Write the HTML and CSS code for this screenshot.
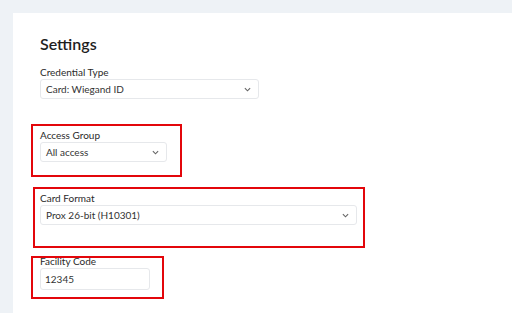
FILE: index.html
```html
<!DOCTYPE html>
<html lang="en">
<head>
    <meta charset="UTF-8">
    <meta name="viewport" content="width=device-width, initial-scale=1.0">
    <title>Settings</title>
    <link rel="stylesheet" href="styles.css">
</head>
<body>
    <div class="card">
        <h1>Settings</h1>

        <div class="field">
            <label>Credential Type</label>
            <div class="select w-cred">
                <span>Card: Wiegand ID</span>
                <svg class="chev" viewBox="0 0 8 5" width="7" height="5"><path d="M1 1 L4 4 L7 1" fill="none" stroke="#666" stroke-width="1.3"/></svg>
            </div>
        </div>

        <div class="field">
            <label>Access Group</label>
            <div class="select w-group">
                <span>All access</span>
                <svg class="chev" viewBox="0 0 8 5" width="7" height="5"><path d="M1 1 L4 4 L7 1" fill="none" stroke="#666" stroke-width="1.3"/></svg>
            </div>
        </div>

        <div class="field">
            <label>Card Format</label>
            <div class="select w-format">
                <span>Prox 26-bit (H10301)</span>
                <svg class="chev" viewBox="0 0 8 5" width="7" height="5"><path d="M1 1 L4 4 L7 1" fill="none" stroke="#666" stroke-width="1.3"/></svg>
            </div>
        </div>

        <div class="field">
            <label>Facility Code</label>
            <div class="input w-code">12345</div>
        </div>

        <!-- marcas rojas de anotación -->
        <div class="mark mark-group"></div>
        <div class="mark mark-format"></div>
        <div class="mark mark-code"></div>
    </div>
</body>
</html>
```

FILE: styles.css
```css
/* General */
* {
    margin: 0;
    padding: 0;
    box-sizing: border-box;
}
body {
    font-family: Lato, "Open Sans", sans-serif;
    background-color: #eef2f6;
    color: #222;
    height: 313px;
    overflow: hidden;
    padding: 13px 0 0 13px;
}

.card {
    position: relative;
    background-color: #fff;
    height: 100%;
    padding: 21px 0 0 27px;
}

.card h1 {
    font-size: 16px;
    font-weight: 600;
    line-height: 20px;
    color: #1e1e1e;
    margin-bottom: 12px;
}

.field {
    margin-bottom: 30px;
}
.field label {
    display: block;
    font-size: 10px;
    line-height: 13px;
    color: #2a2a2a;
}

.select,
.input {
    display: flex;
    align-items: center;
    justify-content: space-between;
    height: 20px;
    padding: 0 7px 0 5px;
    border: 1px solid #e6e8eb;
    border-radius: 3px;
    font-size: 10px;
    color: #333;
}
.input {
    height: 22px;
    padding-left: 4px;
}
.chev {
    display: block;
}

.w-cred { width: 219px; }
.w-group { width: 127px; }
.w-format { width: 317px; }
.w-code { width: 110px; }

/* Marcas */
.mark {
    position: absolute;
    border: 2px solid #e3060b;
}
.mark-group {
    left: 18px;
    top: 111px;
    width: 151px;
    height: 53px;
}
.mark-format {
    left: 20px;
    top: 174px;
    width: 332px;
    height: 61px;
}
.mark-code {
    left: 18px;
    top: 243px;
    width: 133px;
    height: 43px;
}
```
